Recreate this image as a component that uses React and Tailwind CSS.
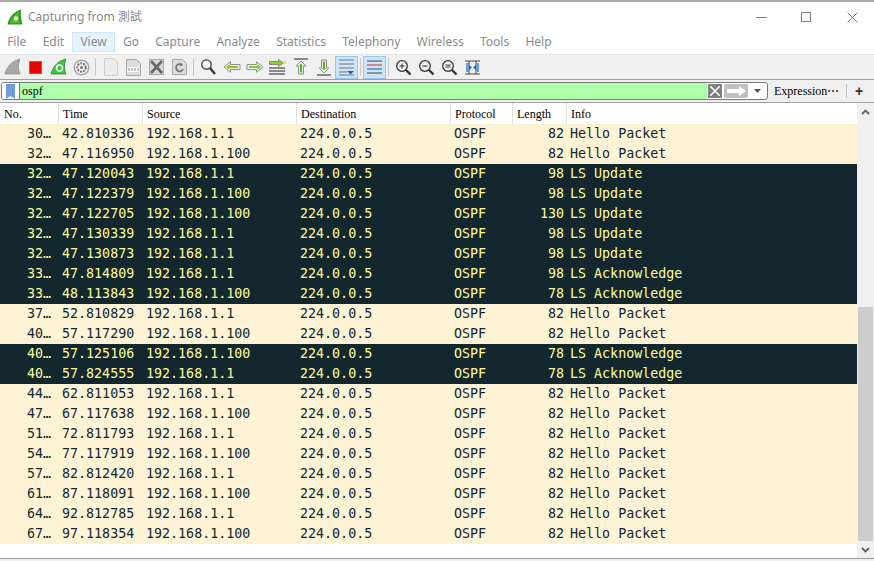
import React from "react";

const base = [
  ["30…","42.810336","192.168.1.1","82","Hello Packet",0],
  ["32…","47.116950","192.168.1.100","82","Hello Packet",0],
  ["32…","47.120043","192.168.1.1","98","LS Update",1],
  ["32…","47.122379","192.168.1.100","98","LS Update",1],
  ["32…","47.122705","192.168.1.100","130","LS Update",1],
  ["32…","47.130339","192.168.1.1","98","LS Update",1],
  ["32…","47.130873","192.168.1.1","98","LS Update",1],
  ["33…","47.814809","192.168.1.1","98","LS Acknowledge",1],
  ["33…","48.113843","192.168.1.100","78","LS Acknowledge",1],
  ["37…","52.810829","192.168.1.1","82","Hello Packet",0],
  ["40…","57.117290","192.168.1.100","82","Hello Packet",0],
  ["40…","57.125106","192.168.1.100","78","LS Acknowledge",1],
  ["40…","57.824555","192.168.1.1","78","LS Acknowledge",1],
  ["44…","62.811053","192.168.1.1","82","Hello Packet",0],
  ["47…","67.117638","192.168.1.100","82","Hello Packet",0],
  ["51…","72.811793","192.168.1.1","82","Hello Packet",0],
  ["54…","77.117919","192.168.1.100","82","Hello Packet",0],
  ["57…","82.812420","192.168.1.1","82","Hello Packet",0],
  ["61…","87.118091","192.168.1.100","82","Hello Packet",0],
  ["64…","92.812785","192.168.1.1","82","Hello Packet",0],
  ["67…","97.118354","192.168.1.100","82","Hello Packet",0],
];

const Btn = ({ children, active, cls = "" }) => (
  <div className={`w-[23px] h-[23px] flex items-center justify-center shrink-0 ${active ? "bg-[#cce4f7] border border-[#99c8ec]" : ""} ${cls}`}>{children}</div>
);
const Sep = () => <div className="w-px h-[18px] bg-[#c8c8c8] mx-[2px] shrink-0" />;
const Arrow = ({ flip }) => (
  <svg width="18" height="12" viewBox="0 0 18 12" style={flip ? { transform: "scaleX(-1)" } : undefined}>
    <path d="M1 3.500h9.500V.8L17 6l-6.500 5.200V8.500H1z" fill="#f2f2f2" stroke="#8f8f8f" strokeWidth="1" />
    <path d="M3 5h8.500V3.200L15 6l-3.500 2.800V7H3z" fill="#86c91a" />
  </svg>
);
const Glass = ({ mark }) => (
  <svg width="17" height="17" viewBox="0 0 17 17" fill="none" stroke="#333">
    <circle cx="7" cy="7" r="5.300" strokeWidth="1.300" />
    <path d="M11 11l4.500 4.500" strokeWidth="2.400" />
    {mark === "plus" && <path d="M4.500 7h5M7 4.500v5" strokeWidth="1.100" />}
    {mark === "minus" && <path d="M4.500 7h5" strokeWidth="1.100" />}
    {mark === "eq" && <path d="M4.500 6h5M4.500 8h5" strokeWidth="1" />}
  </svg>
);

const menu = ["File", "Edit", "View", "Go", "Capture", "Analyze", "Statistics", "Telephony", "Wireless", "Tools", "Help"];

const head = [["No.","w-[59px]"],["Time","w-[84px]"],["Source","w-[154px]"],["Destination","w-[154px]"],["Protocol","w-[62px]"],["Length","w-[54px]"],["Info","flex-1"]];

export default function App() {
  return (
    <div className="w-[874px] h-[561px] bg-white overflow-hidden flex flex-col font-['Liberation_Sans',sans-serif] border-t-2 border-[#a9a9a9]">
      <div className="h-[30px] flex items-center shrink-0 pl-[7px]">
        <svg width="16" height="16" viewBox="0 0 16 16"><path d="M0.500 15.500C2 8 7 2.500 14 0.500c-.5 5 0 10 1.500 15z" fill="#2f9a1c" /><path d="M3 14C4 9 8 5 12 3c-.5 4 0 8 1 11z" fill="#55b830" /><circle cx="9" cy="9.500" r="2.200" fill="#e6f7d4" /></svg>
        <span className="ml-[5px] text-[12px] text-[#8a8a8a] font-['Noto_Sans','Noto_Sans_CJK_TC',sans-serif]">Capturing from 測試</span>
        <div className="ml-auto flex items-center pr-[16px] text-[#808080]">
          <div className="w-[11px] h-px bg-[#808080] mr-[34px]" />
          <div className="w-[10px] h-[10px] border border-[#808080] mr-[36px]" />
          <svg width="11" height="11" viewBox="0 0 11 11" stroke="#808080" strokeWidth="1"><path d="M0.500 0.500l10 10M10.500 0.500l-10 10" /></svg>
        </div>
      </div>
      <div className="h-[20px] flex items-stretch shrink-0 text-[12px] text-[#8a8a8a] font-['Noto_Sans',sans-serif] -ml-px">
        {menu.map((m) => (
          <div key={m} className={`flex items-center border px-[7.15px] ${m === "View" ? "bg-[#e5f3ff] border-[#cce8ff]" : "border-transparent"}`}>{m}</div>
        ))}
      </div>
      <div className="h-[2px] shrink-0" />
      <div className="h-[25px] bg-[#f0f0f0] border-t border-[#e4e4e4] flex items-center shrink-0 pl-[1px]">
        <Btn><svg width="18" height="18" viewBox="0 0 18 18"><path d="M1 16C3 8 8 3 16 1c-2 5-2 10 0 15z" fill="#a8a8a8" stroke="#8c8c8c" strokeWidth="0.700" /></svg></Btn>
        <Btn><div className="w-[13px] h-[13px] bg-[#e60000] border border-[#777]" /></Btn>
        <Btn><svg width="18" height="18" viewBox="0 0 18 18"><path d="M1 16C3 8 8 3 16 1c-2 5-2 10 0 15z" fill="#2fd02f" stroke="#555" strokeWidth="0.700" /><circle cx="9.500" cy="10" r="3" fill="none" stroke="#fff" strokeWidth="1.600" /></svg></Btn>
        <Btn><svg width="17" height="17" viewBox="0 0 17 17" fill="none"><circle cx="8.500" cy="8.500" r="7.300" stroke="#a5a5a5" strokeWidth="1.400" /><circle cx="8.500" cy="8.500" r="4.200" stroke="#777" strokeWidth="2" strokeDasharray="2 1" /><circle cx="8.500" cy="8.500" r="1.500" fill="#777" /></svg></Btn>
        <Sep />
        <Btn cls="ml-[1px]"><svg width="14" height="18" viewBox="0 0 14 18"><path d="M.5.5h9l4 4v13H.5z" fill="#ececec" stroke="#cfcfcf" /></svg></Btn>
        <Btn><svg width="15" height="17" viewBox="0 0 15 17"><path d="M.5.5h10l4 4v12H.5z" fill="#dcdcdc" stroke="#a8a8a8" /><rect x="1.500" y="8" width="12" height="5" fill="#fff" /><path d="M3 9v3M6 9v3M9 9v3M12 9v3" stroke="#888" /></svg></Btn>
        <Btn><svg width="15" height="16" viewBox="0 0 15 16"><rect x=".5" y=".5" width="14" height="15" fill="#d8d8d8" stroke="#a8a8a8" /><path d="M2 2l11 12M13 2L2 14" stroke="#666" strokeWidth="2.600" /></svg></Btn>
        <Btn><svg width="15" height="16" viewBox="0 0 15 16"><path d="M.5.5h10l4 4v11H.5z" fill="#dcdcdc" stroke="#a8a8a8" /><path d="M11 10a3.600 3.600 0 1 1-1-4" fill="none" stroke="#777" strokeWidth="1.800" /><path d="M8.500 3.500l2.500 3-3.500.5z" fill="#777" /></svg></Btn>
        <Sep />
        <Btn cls="ml-[1px]"><svg width="17" height="18" viewBox="0 0 17 18" fill="none" stroke="#333"><circle cx="6.500" cy="6.500" r="4.700" strokeWidth="1.300" fill="#fff" /><path d="M10 10l5 6" strokeWidth="2.400" /></svg></Btn>
        <Btn><Arrow flip /></Btn>
        <Btn><Arrow /></Btn>
        <Btn><svg width="17" height="16" viewBox="0 0 17 16" fill="none"><path d="M0 9h16M0 12h16M0 15h16" stroke="#222" /><path d="M.5 2.500h9V.5l5 3.500-5 3.500v-2h-9z" fill="#8fd11c" stroke="#888" /><rect x="14" y="2" width="3" height="3" fill="#f4e04d" /></svg></Btn>
        <Btn><svg width="16" height="18" viewBox="0 0 16 18" fill="none"><path d="M1 1h14" stroke="#222" /><path d="M8 3l5 5h-2.500v8h-5V8H3z" fill="#f2f2f2" stroke="#8f8f8f" /><path d="M8 5.500L10 8H9v6.500H7V8H6z" fill="#4fb81c" /></svg></Btn>
        <Btn><svg width="16" height="18" viewBox="0 0 16 18" fill="none"><path d="M1 17h14" stroke="#222" /><path d="M8 15l5-5h-2.500V2h-5v8H3z" fill="#f2f2f2" stroke="#8f8f8f" /><path d="M8 12.500L10 10H9V3.500H7V10H6z" fill="#4fb81c" /></svg></Btn>
        <Btn active><svg width="17" height="17" viewBox="0 0 17 17" fill="none"><path d="M1 1h15M1 5h15M1 9h15" stroke="#777" /><path d="M1 13h8M1 16h15" stroke="#777" /><path d="M9 12h7l-3.500 3.500z" fill="#2a5fa8" /></svg></Btn>
        <Sep />
        <Btn active><svg width="15" height="14" viewBox="0 0 15 14" fill="none"><path d="M0 1h15" stroke="#444" /><path d="M0 5h15" stroke="#c83232" /><path d="M0 9h15" stroke="#2a4fa8" /><path d="M0 13h15" stroke="#444" /></svg></Btn>
        <Sep />
        <Btn cls="ml-[1px]"><Glass mark="plus" /></Btn>
        <Btn><Glass mark="minus" /></Btn>
        <Btn><Glass mark="eq" /></Btn>
        <Btn><svg width="15" height="15" viewBox="0 0 15 15" fill="none"><path d="M0 1h15M0 14h15M4 1v13M11 1v13" stroke="#444" /><rect x="1" y="3" width="3" height="9" fill="#6f9bd1" /><rect x="11" y="3" width="3" height="9" fill="#6f9bd1" /><path d="M4 5l3 2.500L4 10zM11 5L8 7.500l3 2.500z" fill="#2a5fa8" /></svg></Btn>
      </div>
      <div className="h-px bg-[#a0a0a0] shrink-0" />
      <div className="h-[22px] bg-[#f0f0f0] flex items-center shrink-0 pl-px">
        <div className="w-[767px] h-[18px] border border-[#7a7a7a] rounded-[3px] flex items-stretch bg-white overflow-hidden">
          <div className="w-[18px] flex items-center justify-center bg-white border-r border-[#7a7a7a]">
            <svg width="9" height="15" viewBox="0 0 9 15"><path d="M0 0h9v15L4.500 12 0 15z" fill="#6f9bd8" /></svg>
          </div>
          <div className="w-[687px] bg-[#afffaf] pl-[2px] text-[12px] leading-[16px] text-black font-['Liberation_Serif',serif]">ospf</div>
          <div className="w-[14px] ml-[1px] my-px bg-[#808080] flex items-center justify-center">
            <svg width="10" height="10" viewBox="0 0 10 10" stroke="#fff" strokeWidth="1.500"><path d="M0 0l10 10M10 0L0 10" /></svg>
          </div>
          <div className="w-[24px] ml-[2px] my-px bg-[#c0c0c0] rounded-[2px] flex items-center justify-center">
            <svg width="19" height="10" viewBox="0 0 19 10"><path d="M0 3h12V0l7 5-7 5V7H0z" fill="#fff" /></svg>
          </div>
          <div className="flex-1 flex items-center justify-center">
            <svg width="7" height="4" viewBox="0 0 7 4"><path d="M0 0h7L3.500 4z" fill="#555" /></svg>
          </div>
        </div>
        <span className="ml-[6px] text-[12px] text-black font-['Liberation_Serif',serif] w-[72px] whitespace-nowrap">Expression⋯</span>
        <div className="w-px h-[14px] bg-[#c8c8c8]" />
        <span className="ml-[8px] text-[14px] font-bold text-[#333] leading-none">+</span>
      </div>
      <div className="h-px bg-[#a0a0a0] shrink-0" />
      <div className="flex-1 flex min-h-0">
        <div className="flex-1 flex flex-col min-w-0">
          <div className="h-[21px] flex shrink-0 text-[12px] text-black font-['Liberation_Serif',serif]">
            {head.map(([h, w], i) => (
              <div key={h} className={`${w} flex items-center pl-[4px] pt-px ${i < 6 ? "border-r border-[#e0e0e0]" : ""}`}>{h}</div>
            ))}
          </div>
          <div className="flex flex-col font-['DejaVu_Sans_Mono',monospace] text-[13.33px]">
            {base.map((r, i) => (
              <div key={i} className={`h-[20px] flex items-center whitespace-nowrap ${r[5] ? "bg-[#12272e] text-[#fffc9c]" : "bg-[#fff3d6] text-[#12272e]"}`}>
                <div className="w-[59px] text-right pr-[8px]">{r[0]}</div>
                <div className="w-[84px] pl-[3px]">{r[1]}</div>
                <div className="w-[154px] pl-[3px]">{r[2]}</div>
                <div className="w-[154px] pl-[3px]">224.0.0.5</div>
                <div className="w-[62px] pl-[3px]">OSPF</div>
                <div className="w-[54px] text-right pr-[3px]">{r[3]}</div>
                <div className="flex-1 pl-[3px]">{r[4]}</div>
              </div>
            ))}
          </div>
          <div className="flex-1" />
        </div>
        <div className="w-[17px] bg-[#f0f0f0] flex flex-col shrink-0">
          <div className="h-[18px] flex items-center justify-center">
            <svg width="9" height="6" viewBox="0 0 9 6" fill="none" stroke="#606060" strokeWidth="1.800"><path d="M1 5l3.500-3.500L8 5" /></svg>
          </div>
          <div className="flex-1 flex flex-col pl-px">
            <div className="h-[186px]" />
            <div className="flex-1 bg-[#cdcdcd] w-[15px]" />
          </div>
          <div className="h-[17px] flex items-center justify-center">
            <svg width="9" height="6" viewBox="0 0 9 6" fill="none" stroke="#606060" strokeWidth="1.800"><path d="M1 1l3.500 3.500L8 1" /></svg>
          </div>
        </div>
      </div>
      <div className="h-[3px] border-t border-[#9a9a9a] shrink-0 bg-[#f0f0f0]" />
    </div>
  );
}
